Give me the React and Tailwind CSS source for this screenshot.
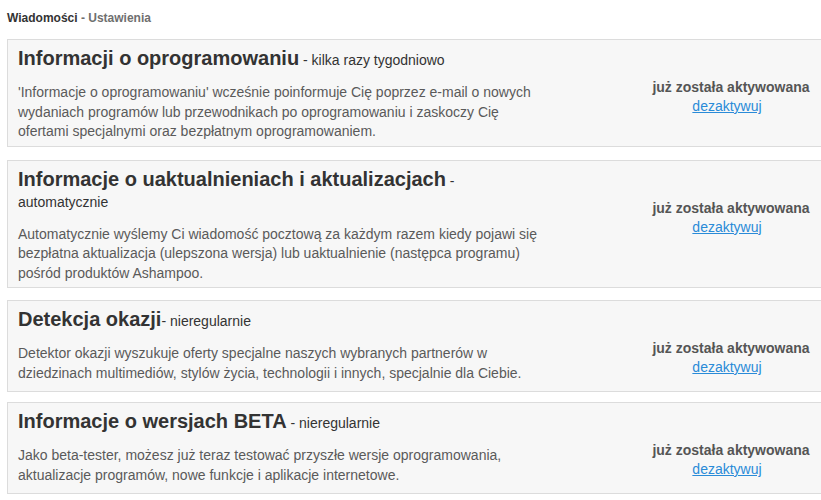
import React from "react";

const items = [
  {
    title: "Informacji o oprogramowaniu",
    freq: "kilka razy tygodniowo",
    desc: "'Informacje o oprogramowaniu' wcześnie poinformuje Cię poprzez e-mail o nowych wydaniach programów lub przewodnikach po oprogramowaniu i zaskoczy Cię ofertami specjalnymi oraz bezpłatnym oprogramowaniem.",
    mb: "mb-[13px]",
  },
  {
    title: "Informacje o uaktualnieniach i aktualizacjach",
    freq: "automatycznie",
    desc: "Automatycznie wyślemy Ci wiadomość pocztową za każdym razem kiedy pojawi się bezpłatna aktualizacja (ulepszona wersja) lub uaktualnienie (następca programu) pośród produktów Ashampoo.",
    mb: "mb-[12px]",
  },
  {
    title: "Detekcja okazji",
    freq: "nieregularnie",
    desc: "Detektor okazji wyszukuje oferty specjalne naszych wybranych partnerów w dziedzinach multimediów, stylów życia, technologii i innych, specjalnie dla Ciebie.",
    mb: "mb-[10px]",
    noSpace: true,
  },
  {
    title: "Informacje o wersjach BETA",
    freq: "nieregularnie",
    desc: "Jako beta-tester, możesz już teraz testować przyszłe wersje oprogramowania, aktualizacje programów, nowe funkcje i aplikacje internetowe.",
    mb: "mb-[10px]",
  },
];

export default function App() {
  return (
    <div
      className="w-full min-h-[500px] bg-white overflow-hidden"
      style={{ fontFamily: '"Liberation Sans", Arial, sans-serif' }}
    >
      <div className="w-[840px] pl-[7px] pt-[11px]">
        <div className="text-[12px] font-bold leading-[14px] text-[#333]">
          Wiadomości <span className="text-[#6f6f6f]">- Ustawienia</span>
        </div>
        <div className="mt-[14px]">
          {items.map((it, i) => (
            <div
              key={i}
              className={`flex border border-[#dcdcdc] bg-[#f7f7f7] ${it.mb}`}
            >
              <div className="w-[535px] pl-[10px] pt-[8px] pb-[4px]">
                <div className="text-[20px] font-bold leading-[21px] text-[#333]">
                  {it.title}
                  <span className="text-[14px] leading-[14px] font-normal text-[#333]">
                    {it.noSpace ? "" : " "}- {it.freq}
                  </span>
                </div>
                <div className="mt-[14px] text-[14px] leading-[19.5px] text-[#5a5a5a]">
                  {it.desc}
                </div>
              </div>
              <div className="ml-[88px] w-[200px] pt-[38px] pb-[14px] text-center text-[14px] leading-[19px]">
                <div className="font-bold text-[#555]">już została aktywowana</div>
                <div className="pr-[8px]">
                  <a href="#" className="text-[#2a8bd8] underline">
                    dezaktywuj
                  </a>
                </div>
              </div>
            </div>
          ))}
        </div>
      </div>
    </div>
  );
}
